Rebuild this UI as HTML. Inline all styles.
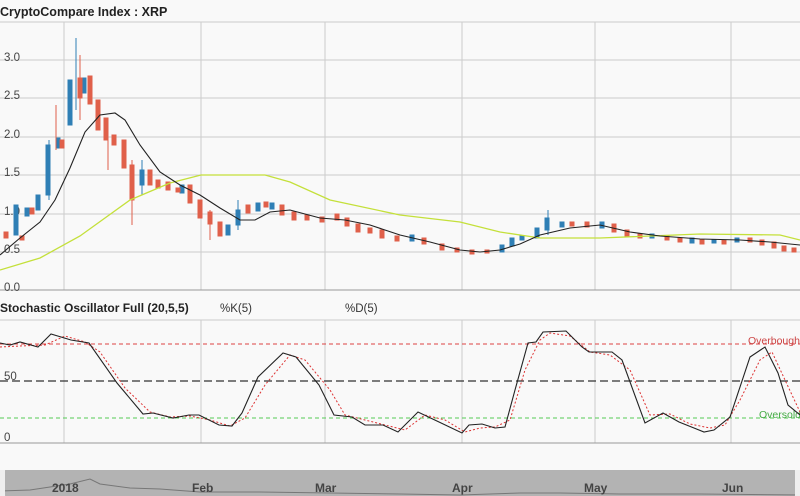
<!DOCTYPE html>
<html><head><meta charset="utf-8"><style>
body{margin:0;width:800px;height:496px;overflow:hidden;background:#f9f9f9}
svg{display:block}
text{font-family:"Liberation Sans",sans-serif}
</style></head><body>
<svg width="800" height="496" viewBox="0 0 800 496">
<rect width="800" height="496" fill="#f9f9f9"/>
<text x="0" y="16" font-size="12.5" font-weight="bold" fill="#222">CryptoCompare Index : XRP</text>
<line x1="0" y1="22" x2="800" y2="22" stroke="#ccc"/>
<g stroke="#ccc" stroke-width="1">
<line x1="0" y1="60" x2="800" y2="60"/><line x1="0" y1="98" x2="800" y2="98"/><line x1="0" y1="137" x2="800" y2="137"/><line x1="0" y1="175" x2="800" y2="175"/><line x1="0" y1="214" x2="800" y2="214"/><line x1="0" y1="252" x2="800" y2="252"/>
<line x1="64" y1="22" x2="64" y2="290"/><line x1="201" y1="22" x2="201" y2="290"/><line x1="325" y1="22" x2="325" y2="290"/><line x1="462" y1="22" x2="462" y2="290"/><line x1="595" y1="22" x2="595" y2="290"/><line x1="731" y1="22" x2="731" y2="290"/>
</g>
<line x1="0" y1="290" x2="800" y2="290" stroke="#999"/>
<g font-size="11.5" fill="#444">
<text x="4" y="61">3.0</text><text x="4" y="99">2.5</text><text x="4" y="138">2.0</text><text x="4" y="176">1.5</text><text x="4" y="215">1.0</text><text x="4" y="253">0.5</text><text x="4" y="291">0.0</text>
</g>
<g stroke-width="1">
<g fill="#2f7fb5" stroke="#2f7fb5">
<rect x="14" y="205" width="4" height="30"/><rect x="25" y="208" width="4" height="8"/><rect x="36" y="195" width="4" height="15"/><rect x="46" y="145" width="4" height="50"/><rect x="56" y="138" width="4" height="10"/><rect x="68" y="80" width="4" height="45"/><rect x="82" y="78" width="4" height="15"/><rect x="140" y="170" width="4" height="15"/><rect x="180" y="185" width="4" height="8"/><rect x="226" y="225" width="4" height="10"/><rect x="236" y="210" width="4" height="15"/><rect x="256" y="203" width="4" height="8"/><rect x="270" y="203" width="4" height="6"/><rect x="410" y="235" width="4" height="6"/><rect x="500" y="245" width="4" height="7"/><rect x="510" y="238" width="4" height="8"/><rect x="520" y="236" width="4" height="4"/><rect x="535" y="228" width="4" height="10"/><rect x="545" y="218" width="4" height="12"/><rect x="560" y="222" width="4" height="5"/><rect x="600" y="222" width="4" height="6"/><rect x="650" y="234" width="4" height="4"/><rect x="690" y="238" width="4" height="5"/><rect x="712" y="240" width="4" height="3"/><rect x="735" y="238" width="4" height="4"/>
<line x1="76" y1="38" x2="76" y2="110"/><line x1="49" y1="140" x2="49" y2="200"/><line x1="142" y1="160" x2="142" y2="195"/><line x1="238" y1="200" x2="238" y2="230"/><line x1="548" y1="210" x2="548" y2="235"/>
</g>
<g fill="#e0604a" stroke="#e0604a">
<rect x="4" y="232" width="4" height="6"/><rect x="20" y="236" width="4" height="4"/><rect x="30" y="208" width="4" height="6"/><rect x="60" y="140" width="4" height="8"/><rect x="78" y="78" width="4" height="20"/><rect x="88" y="76" width="4" height="28"/><rect x="96" y="100" width="4" height="30"/><rect x="104" y="118" width="4" height="22"/><rect x="112" y="135" width="4" height="10"/><rect x="122" y="140" width="4" height="28"/><rect x="130" y="165" width="4" height="35"/><rect x="148" y="170" width="4" height="15"/><rect x="156" y="180" width="4" height="8"/><rect x="166" y="182" width="4" height="8"/><rect x="176" y="188" width="4" height="4"/><rect x="188" y="185" width="4" height="18"/><rect x="198" y="200" width="4" height="18"/><rect x="208" y="212" width="4" height="12"/><rect x="218" y="222" width="4" height="14"/><rect x="246" y="205" width="4" height="8"/><rect x="264" y="202" width="4" height="5"/><rect x="280" y="205" width="4" height="10"/><rect x="292" y="212" width="4" height="8"/><rect x="305" y="215" width="4" height="5"/><rect x="320" y="217" width="4" height="5"/><rect x="335" y="214" width="4" height="6"/><rect x="345" y="218" width="4" height="8"/><rect x="356" y="224" width="4" height="8"/><rect x="368" y="228" width="4" height="5"/><rect x="380" y="230" width="4" height="8"/><rect x="395" y="236" width="4" height="5"/><rect x="422" y="238" width="4" height="6"/><rect x="440" y="244" width="4" height="6"/><rect x="455" y="248" width="4" height="4"/><rect x="470" y="250" width="4" height="4"/><rect x="485" y="250" width="4" height="3"/><rect x="570" y="222" width="4" height="4"/><rect x="585" y="222" width="4" height="5"/><rect x="612" y="224" width="4" height="8"/><rect x="625" y="230" width="4" height="6"/><rect x="638" y="234" width="4" height="4"/><rect x="665" y="236" width="4" height="4"/><rect x="678" y="238" width="4" height="4"/><rect x="700" y="240" width="4" height="4"/><rect x="722" y="240" width="4" height="4"/><rect x="748" y="238" width="4" height="4"/><rect x="760" y="240" width="4" height="5"/><rect x="772" y="242" width="4" height="6"/><rect x="782" y="246" width="4" height="5"/><rect x="792" y="248" width="4" height="4"/>
<line x1="80" y1="55" x2="80" y2="120"/><line x1="108" y1="120" x2="108" y2="170"/><line x1="132" y1="160" x2="132" y2="225"/><line x1="210" y1="210" x2="210" y2="240"/><line x1="56" y1="105" x2="56" y2="150"/>
</g>
</g>
<polyline fill="none" stroke="#c4e03a" stroke-width="1.3" points="0,270 40,258 80,236 130,200 170,183 201,175 265,175 290,182 330,200 400,215 460,222 500,232 540,238 600,238 700,234 780,235 800,240"/>
<polyline fill="none" stroke="#222" stroke-width="1.1" points="0,255 20,238 40,222 55,200 70,168 85,132 100,115 115,113 125,120 140,145 160,172 180,185 200,195 220,208 240,220 255,220 270,212 290,210 320,218 345,220 370,225 400,235 430,242 460,250 480,252 500,250 520,244 540,235 570,228 600,225 630,232 660,236 700,239 740,240 770,242 800,245"/>

<text x="0" y="312" font-size="12" font-weight="bold" fill="#222">Stochastic Oscillator Full (20,5,5)</text>
<text x="220" y="312" font-size="11.5" fill="#333">%K(5)</text>
<text x="345" y="312" font-size="11.5" fill="#333">%D(5)</text>
<line x1="0" y1="320" x2="800" y2="320" stroke="#ccc"/>
<g stroke="#ccc"><line x1="64" y1="320" x2="64" y2="443"/><line x1="201" y1="320" x2="201" y2="443"/><line x1="325" y1="320" x2="325" y2="443"/><line x1="462" y1="320" x2="462" y2="443"/><line x1="595" y1="320" x2="595" y2="443"/><line x1="731" y1="320" x2="731" y2="443"/></g>
<line x1="0" y1="443" x2="800" y2="443" stroke="#999"/>
<line x1="0" y1="344" x2="800" y2="344" stroke="#d44" stroke-dasharray="4,3"/>
<line x1="0" y1="381" x2="800" y2="381" stroke="#333" stroke-dasharray="8,4" stroke-width="1.2"/>
<line x1="0" y1="418" x2="800" y2="418" stroke="#5c5" stroke-dasharray="4,3"/>
<text x="4" y="380" font-size="11.5" fill="#444">50</text>
<text x="4" y="441" font-size="11.5" fill="#444">0</text>
<text x="748" y="344" font-size="10.5" fill="#c44">Overbought</text>
<text x="759" y="418" font-size="10.5" fill="#4a4">Oversold</text>
<polyline fill="none" stroke="#d33" stroke-width="1" stroke-dasharray="2,2" points="0,347 20,346 45,345 65,336 85,342 100,352 125,388 150,412 170,417 190,416 210,420 230,426 245,418 265,385 290,355 305,360 330,390 345,415 365,420 385,425 405,430 425,415 445,420 465,432 480,428 495,427 510,420 525,370 540,340 550,333 570,336 590,352 610,355 630,370 650,415 670,414 690,424 710,428 725,425 740,400 760,360 772,352 785,380 800,412"/>
<polyline fill="none" stroke="#222" stroke-width="1.1" points="0,343 10,345 20,342 38,347 51,334 71,340 89,343 117,383 143,414 153,413 173,418 189,415 199,415 219,425 232,426 242,413 258,377 283,353 296,357 319,385 334,415 352,417 365,425 383,425 398,432 418,412 439,422 462,433 469,425 482,424 495,428 505,427 515,390 528,343 536,342 543,332 566,331 582,347 589,352 612,352 622,360 645,423 663,413 679,422 694,428 704,432 714,430 730,417 750,357 765,347 778,373 788,405 800,415"/>

<rect x="0" y="470" width="800" height="26" rx="6" fill="#b3b3b3"/>
<polyline fill="none" stroke="#777" stroke-width="1" points="0,491 30,490 50,487 70,484 90,479 100,484 130,488 160,489 200,492 260,492 330,493 400,494 460,495 520,493 560,493 620,494 700,494 800,495"/>
<rect x="0" y="470" width="5" height="26" fill="#eee"/>
<rect x="795" y="470" width="5" height="26" fill="#eee"/>
<g font-size="12" font-weight="bold" fill="#444"><text x="52" y="492">2018</text><text x="192" y="492">Feb</text><text x="315" y="492">Mar</text><text x="452" y="492">Apr</text><text x="584" y="492">May</text><text x="722" y="492">Jun</text></g>
</svg>
</body></html>
